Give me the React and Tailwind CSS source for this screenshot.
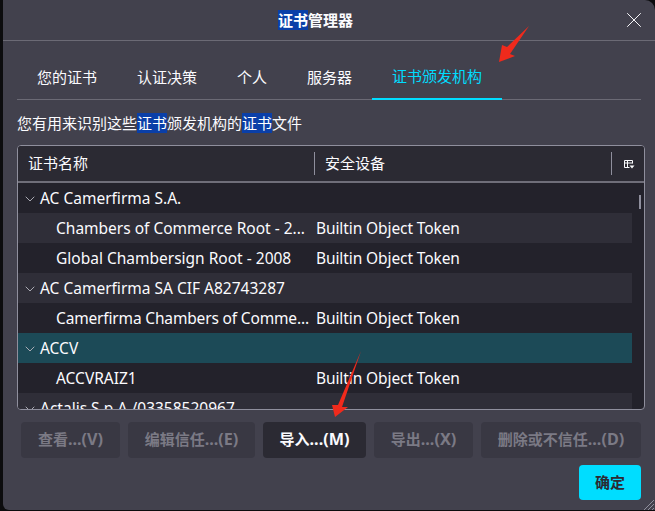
import React from "react";
import { ChevronDown, X } from "lucide-react";

const tabs = ["您的证书", "认证决策", "个人", "服务器", "证书颁发机构"];

const rows = [
  { name: "AC Camerfirma S.A.", group: true, bg: "bg-[#23222b]" },
  { name: "Chambers of Commerce Root - 2...", device: "Builtin Object Token", bg: "bg-[#2f2e38]" },
  { name: "Global Chambersign Root - 2008", device: "Builtin Object Token", bg: "bg-[#23222b]" },
  { name: "AC Camerfirma SA CIF A82743287", group: true, bg: "bg-[#2f2e38]" },
  { name: "Camerfirma Chambers of Comme...", device: "Builtin Object Token", bg: "bg-[#23222b]", tight: true },
  { name: "ACCV", group: true, bg: "bg-[#1c4a57]" },
  { name: "ACCVRAIZ1", device: "Builtin Object Token", bg: "bg-[#23222b]" },
  { name: "Actalis S.p.A./03358520967", group: true, bg: "bg-[#2f2e38]" },
];

const buttons = [
  { label: "查看", hint: "...(V)", width: "w-[99px]" },
  { label: "编辑信任", hint: "...(E)", width: "w-[127px]" },
  { label: "导入", hint: "...(M)", width: "w-[103px]", active: true },
  { label: "导出", hint: "...(X)", width: "w-[99px]" },
  { label: "删除或不信任", hint: "...(D)", width: "w-[160px]" },
];

function Mark({ children }) {
  return <span className="bg-[#0a3fa8] text-white">{children}</span>;
}

function Row({ row }) {
  return (
    <div className={`flex h-[30px] shrink-0 items-center pt-[1px] text-[15.5px] ${row.bg}`}>
      {row.group ? (
        <div className="flex items-center pl-[4px] text-[#fbfbfe]">
          <ChevronDown size={16} strokeWidth={1.4} className="mr-[2px] text-[#b4b4bc]" />
          <span className="whitespace-nowrap">{row.name}</span>
        </div>
      ) : (
        <>
          <div
            className={`w-[298px] shrink-0 overflow-hidden whitespace-nowrap pl-[38px] ${
              row.tight ? "tracking-[-0.16px]" : ""
            }`}
          >
            {row.name}
          </div>
          <div className="whitespace-nowrap tracking-[-0.1px]">{row.device}</div>
        </>
      )}
    </div>
  );
}

export default function App() {
  return (
    <div
      className="relative h-[511px] w-[655px] overflow-hidden bg-[#0c0c0e] pb-px pl-[3px] text-[15px] text-[#fbfbfe]"
      style={{ fontFamily: '"Noto Sans", "Noto Sans CJK SC", sans-serif' }}
    >
      <div className="flex h-full flex-col rounded-tr-[10px] rounded-bl-[6px] bg-[#42414d]">
        {/* title bar */}
        <div className="flex h-[41px] shrink-0 items-center border-b border-[#6b6a75]">
          <div className="w-[625px] text-center font-semibold">
            <Mark>证书</Mark>管理器
          </div>
          <X size={26} strokeWidth={0.9} className="ml-[-7px]" />
        </div>

        {/* tabs */}
        <div className="mx-[14px] mt-[18px] flex h-[41px] w-[624px] shrink-0 border-b border-[#6b6a75]">
          {tabs.map((tab, i) => (
            <div
              key={tab}
              className={
                i === 4
                  ? "mb-[-1px] flex items-center border-b-[2px] border-[#00ddff] px-5 pb-[4px] text-[#00ddff]"
                  : "flex items-center px-5 pb-[4px]"
              }
            >
              {tab}
            </div>
          ))}
        </div>

        <p className="mx-[14px] mt-[11px] h-[24px] leading-[24px]">
          您有用来识别这些<Mark>证书</Mark>颁发机构的<Mark>证书</Mark>文件
        </p>

        {/* table */}
        <div className="ml-[14px] mt-[10px] flex h-[265px] w-[628px] shrink-0 flex-col overflow-hidden rounded-[4px] border border-[#8f8f9d] bg-[#23222b]">
          <div className="flex h-[37px] shrink-0 items-center border-b-2 border-[#6f6e79] bg-[#2b2a33]">
            <div className="w-[296px] pl-[10px]">证书名称</div>
            <div className="h-[23px] w-px bg-[#8f8f9d]" />
            <div className="w-[296px] pl-[10px]">安全设备</div>
            <div className="h-[23px] w-px bg-[#8f8f9d]" />
            <svg width="11" height="10" viewBox="0 0 11 10" className="ml-[12px]" fill="none">
              <path d="M5.5 8.5H.5v-7h8v3M.5 4h8M3.5 1.5v7" stroke="#fbfbfe" />
              <path d="M5.5 6.5h5L8 9.5z" fill="#fbfbfe" />
            </svg>
          </div>
          <div className="flex min-h-0 flex-1">
            <div className="w-[614px] shrink-0 overflow-hidden">
              {rows.map((row) => (
                <Row key={row.name} row={row} />
              ))}
            </div>
            <div className="flex-1 pl-[7px] pt-[12px]">
              <div className="h-[14px] w-[2px] bg-[#8f8f9d]" />
            </div>
          </div>
        </div>

        {/* action buttons */}
        <div className="ml-[18px] mt-[12px] flex gap-2">
          {buttons.map((b) => (
            <div
              key={b.label}
              className={`flex h-[36px] items-center justify-center rounded-[4px] pb-[2px] font-bold ${b.width} ${
                b.active ? "bg-[#2b2a33] text-[#fbfbfe]" : "bg-[#393843] text-[#7b7a85]"
              }`}
            >
              {b.label}
              <span className="text-[16.2px]">{b.hint}</span>
            </div>
          ))}
        </div>

        <div className="mr-[14px] mt-[7px] flex justify-end">
          <div className="flex h-[35px] w-[62px] items-center justify-center rounded-[4px] bg-[#00ddff] font-semibold text-[#2b2a33]">
            确定
          </div>
        </div>
      </div>

      {/* annotation arrows */}
      <svg width="655" height="511" className="pointer-events-none absolute left-0 top-0">
        <polygon points="529,26 507,47 502,45 499,62 515,56 510,54" fill="#f02a1c" />
        <polygon points="361,351 338,405 332,405 335,417 348,407 342,407" fill="#f02a1c" />
        <path d="M644 510l10-10M648 510l6-6M652 510l2-2" stroke="#8f8f9d" />
      </svg>
    </div>
  );
}
